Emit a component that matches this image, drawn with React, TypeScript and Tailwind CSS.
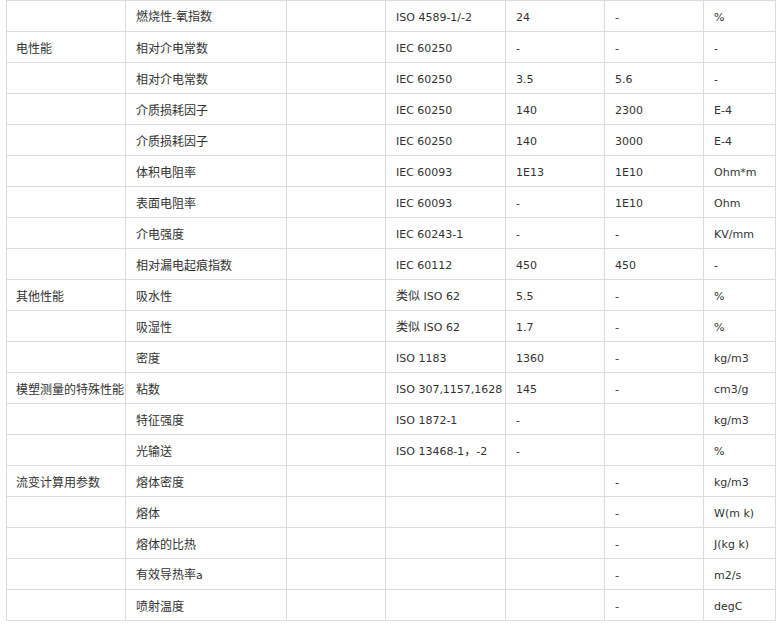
import React from "react";

const rows: string[][] = [
  ["", "燃烧性-氧指数", "", "ISO 4589-1/-2", "24", "-", "%"],
  ["电性能", "相对介电常数", "", "IEC 60250", "-", "-", "-"],
  ["", "相对介电常数", "", "IEC 60250", "3.5", "5.6", "-"],
  ["", "介质损耗因子", "", "IEC 60250", "140", "2300", "E-4"],
  ["", "介质损耗因子", "", "IEC 60250", "140", "3000", "E-4"],
  ["", "体积电阻率", "", "IEC 60093", "1E13", "1E10", "Ohm*m"],
  ["", "表面电阻率", "", "IEC 60093", "-", "1E10", "Ohm"],
  ["", "介电强度", "", "IEC 60243-1", "-", "-", "KV/mm"],
  ["", "相对漏电起痕指数", "", "IEC 60112", "450", "450", "-"],
  ["其他性能", "吸水性", "", "类似 ISO 62", "5.5", "-", "%"],
  ["", "吸湿性", "", "类似 ISO 62", "1.7", "-", "%"],
  ["", "密度", "", "ISO 1183", "1360", "-", "kg/m3"],
  ["模塑测量的特殊性能", "粘数", "", "ISO 307,1157,1628", "145", "-", "cm3/g"],
  ["", "特征强度", "", "ISO 1872-1", "-", "", "kg/m3"],
  ["", "光输送", "", "ISO 13468-1，-2", "-", "", "%"],
  ["流变计算用参数", "熔体密度", "", "", "", "-", "kg/m3"],
  ["", "熔体", "", "", "", "-", "W(m k)"],
  ["", "熔体的比热", "", "", "", "-", "J(kg k)"],
  ["", "有效导热率a", "", "", "", "-", "m2/s"],
  ["", "喷射温度", "", "", "", "-", "degC"],
];

function MixedText({ text }: { text: string }) {
  const parts = text.match(/[\u3000-\u9fff\uff00-\uffef]+|[^\u3000-\u9fff\uff00-\uffef]+/g) || [];
  return (
    <span className="whitespace-pre">
      {parts.map((p, i) =>
        /[\u3000-\u9fff\uff00-\uffef]/.test(p) ? (
          <span key={i} className="text-[12px] [font-family:'Noto_Sans_CJK_SC',sans-serif]">
            {p}
          </span>
        ) : (
          <span key={i} className="text-[11px] [font-family:'DejaVu_Sans',sans-serif]">
            {p}
          </span>
        )
      )}
    </span>
  );
}

export default function App() {
  return (
    <div className="bg-white w-[782px] h-[628px] overflow-hidden">
      <div className="ml-[6px] w-[770px] border-l border-t border-[#dddddd] grid grid-cols-[119px_161px_99px_120px_99px_99px_72px] text-[#333333] text-[12px] [font-family:'Noto_Sans_CJK_SC',sans-serif]">
        {rows.map((r, ri) =>
          r.map((c, ci) => (
            <div
              key={`${ri}-${ci}`}
              className={`h-[31px] border-r border-b border-[#dddddd] flex items-center whitespace-nowrap leading-[12px] pt-[2px] ${
                ci === 0 ? "pl-[9px]" : "pl-[10px]"
              }`}
            >
              <MixedText text={c} />
            </div>
          ))
        )}
      </div>
    </div>
  );
}
